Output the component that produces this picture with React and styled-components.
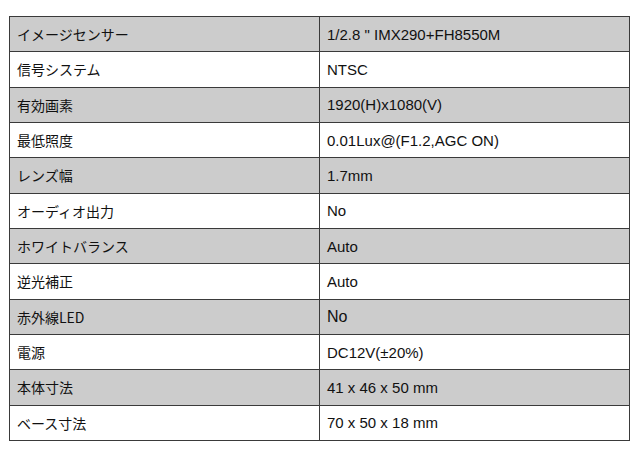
import React from "react";
import styled, { createGlobalStyle } from "styled-components";

const Global = createGlobalStyle`
  html, body { margin: 0; padding: 0; background: #ffffff; }
  #root { width: 640px; height: 454px; }
`;

const Page = styled.div`
  padding: 16px 0 0 9px;
`;

const SpecTable = styled.div`
  width: 621px;
  height: 425px;
  box-sizing: border-box;
  display: grid;
  grid-template-columns: 309px 309px;
  grid-template-rows: repeat(12, 1fr);
  gap: 1px;
  padding: 1px;
  background: #3a3a3a;
`;

const Cell = styled.div`
  background: ${(p) => (p.$shaded ? "#cccccc" : "#ffffff")};
  display: flex;
  align-items: center;
  padding-left: 7px;
  color: #111111;
  font-family: ${(p) =>
    p.$value
      ? '"Liberation Sans", Arial, sans-serif'
      : '"Noto Sans CJK JP", "Noto Sans", sans-serif'};
  font-size: ${(p) => (p.$big ? "16px" : p.$value ? "15px" : "14px")};
  line-height: 1;
`;

const rows = [
  ["イメージセンサー", '1/2.8 " IMX290+FH8550M'],
  ["信号システム", "NTSC"],
  ["有効画素", "1920(H)x1080(V)"],
  ["最低照度", "0.01Lux@(F1.2,AGC ON)"],
  ["レンズ幅", "1.7mm"],
  ["オーディオ出力", "No"],
  ["ホワイトバランス", "Auto"],
  ["逆光補正", "Auto"],
  ["赤外線LED", "No", true],
  ["電源", "DC12V(±20%)"],
  ["本体寸法", "41 x 46 x 50 mm"],
  ["ベース寸法", "70 x 50 x 18 mm"],
];

export default function App() {
  return (
    <>
      <Global />
      <Page>
        <SpecTable>
          {rows.map(([k, v, big], i) => (
            <React.Fragment key={k}>
              <Cell $shaded={i % 2 === 0}>{k}</Cell>
              <Cell $shaded={i % 2 === 0} $value $big={big}>
                {v}
              </Cell>
            </React.Fragment>
          ))}
        </SpecTable>
      </Page>
    </>
  );
}
